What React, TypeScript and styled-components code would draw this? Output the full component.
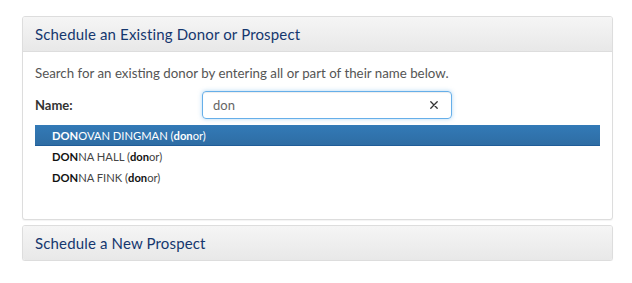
import styled, { createGlobalStyle } from 'styled-components'

const GlobalStyle = createGlobalStyle`
  html, body {
    margin: 0;
    padding: 0;
    background: #fff;
  }
  body {
    font-family: 'Lato', 'Liberation Sans', Arial, sans-serif;
    color: #333;
  }
`

const Page = styled.div`
  padding: 16px 19px 0 22px;
  display: flex;
  flex-direction: column;
  gap: 5px;
`

const Panel = styled.section`
  border: 1px solid #ddd;
  border-radius: 3px;
  background: #fff;
  box-shadow: 0 1px 1px rgba(0, 0, 0, 0.05);
  overflow: hidden;
`

const PanelHeading = styled.div<{ $collapsed?: boolean }>`
  height: 34px;
  display: flex;
  align-items: center;
  padding: 0 12px;
  background: linear-gradient(to bottom, #f5f5f5 0%, #e8e8e8 100%);
  border-bottom: ${({ $collapsed }) => ($collapsed ? 'none' : '1px solid #ddd')};
`

const PanelTitle = styled.h3`
  margin: 0;
  font-size: 15px;
  font-weight: 400;
  color: #15376e;
  letter-spacing: 0.15px;
`

const PanelBody = styled.div`
  padding: 13px 12px 31px;
`

const Intro = styled.p`
  margin: 0 0 10px;
  font-size: 13.3px;
  color: #555;
`

const FieldRow = styled.div`
  display: grid;
  grid-template-columns: 167px 250px;
  align-items: center;
  margin-bottom: 6px;
`

const Label = styled.label`
  font-size: 13px;
  font-weight: 700;
  color: #333;
`

const InputWrap = styled.div`
  position: relative;
  height: 28px;
  box-sizing: border-box;
  border: 1px solid #66afe9;
  border-radius: 4px;
  box-shadow: inset 0 1px 1px rgba(0, 0, 0, 0.075), 0 0 4px rgba(102, 175, 233, 0.5);
  display: flex;
  align-items: center;
`

const Input = styled.input`
  border: none;
  outline: none;
  background: transparent;
  flex: 1;
  height: 100%;
  padding: 0 10px;
  font-family: inherit;
  font-size: 13px;
  color: #666;
`

const ClearButton = styled.button`
  border: none;
  background: transparent;
  padding: 0;
  width: 34px;
  height: 100%;
  display: flex;
  align-items: center;
  justify-content: center;
  color: #333;
`

const Results = styled.ul`
  list-style: none;
  margin: 0;
  padding: 0;
`

const ResultItem = styled.li<{ $active?: boolean }>`
  height: 21px;
  box-sizing: border-box;
  display: flex;
  align-items: center;
  padding-left: 17px;
  font-size: 11.2px;
  color: ${({ $active }) => ($active ? '#fff' : '#444')};
  background: ${({ $active }) =>
    $active ? 'linear-gradient(to bottom, #337ab7 0%, #2e6da4 100%)' : 'transparent'};
  border-bottom: ${({ $active }) => ($active ? '1px solid #1f5c98' : 'none')};
  b {
    font-weight: 700;
    color: ${({ $active }) => ($active ? '#fff' : '#111')};
  }
`

const results = [
  { name: 'OVAN DINGMAN', active: true },
  { name: 'NA HALL', active: false },
  { name: 'NA FINK', active: false }
]

export default function App() {
  return (
    <>
      <GlobalStyle />
      <Page>
        <Panel>
          <PanelHeading>
            <PanelTitle>Schedule an Existing Donor or Prospect</PanelTitle>
          </PanelHeading>
          <PanelBody>
            <Intro>Search for an existing donor by entering all or part of their name below.</Intro>
            <FieldRow>
              <Label htmlFor="donor-name">Name:</Label>
              <InputWrap>
                <Input id="donor-name" defaultValue="don" />
                <ClearButton type="button" aria-label="Clear">
                  <svg width="8" height="8" viewBox="0 0 8 8">
                    <path d="M0.8 0.8L7.2 7.2M7.2 0.8L0.8 7.2" stroke="#333" strokeWidth="1.3" strokeLinecap="round" />
                  </svg>
                </ClearButton>
              </InputWrap>
            </FieldRow>
            <Results>
              {results.map(r => (
                <ResultItem key={r.name} $active={r.active}>
                  <b>DON</b>
                  {r.name}&nbsp;(<b>don</b>or)
                </ResultItem>
              ))}
            </Results>
          </PanelBody>
        </Panel>
        <Panel>
          <PanelHeading $collapsed>
            <PanelTitle>Schedule a New Prospect</PanelTitle>
          </PanelHeading>
        </Panel>
      </Page>
    </>
  )
}
